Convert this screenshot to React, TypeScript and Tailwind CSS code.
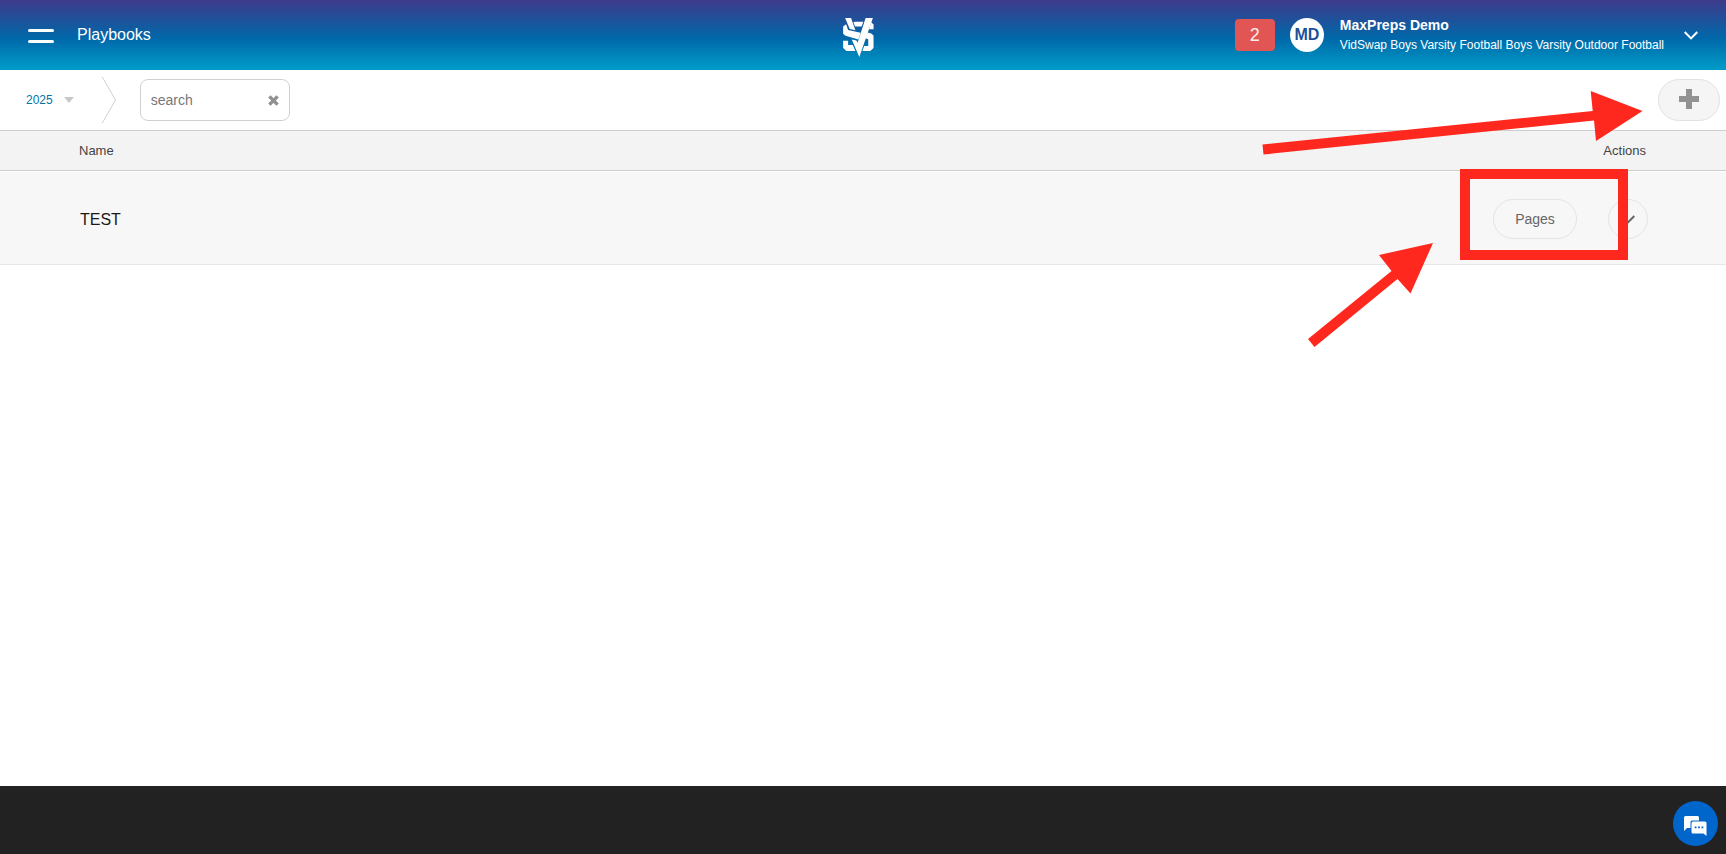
import React, { useState } from 'react';

interface Playbook {
    id: number;
    name: string;
}

const playbooks: Playbook[] = [{ id: 1, name: 'TEST' }];

const Logo: React.FC = () => (
    <svg viewBox="69 54 93 118" className="h-[39px] w-[31px]" fill="#fff" aria-label="VidSwap" role="img">
        <path d="M75 54H93L106 91L89 87Z" />
        <path d="M137 54H159L118 172L95 119L109 122L113 128Z" />
        <path d="M100 67L104 65H130L125 80H105Z" />
        <path d="M69 80L78 73L84 90L122 99L115 119L76 108L69 102Z" />
        <path d="M154 67L161 74V88H147Z" />
        <path d="M69 123H84V136H98L106 154H79L69 145Z" />
        <path d="M143 98L154 101L161 107V145L151 154H127L133 139H145V118L136 115Z" />
    </svg>
);

const Header: React.FC = () => (
    <header className="flex h-[70px] items-center bg-linear-to-b/srgb from-[#3f3a8c] via-[#0068a9] via-55% to-[#009dc9] text-white">
        <div className="flex flex-1 items-center pl-7">
            <button type="button" aria-label="Menu" className="mt-0.5 flex w-[26px] flex-col gap-2">
                <span className="h-[3px] w-full rounded-full bg-white" />
                <span className="h-[3px] w-full rounded-full bg-white" />
            </button>
            <h1 className="ml-[23px] text-base">Playbooks</h1>
        </div>
        <a href="#home" className="mt-1 mr-2.5">
            <Logo />
        </a>
        <div className="flex flex-1 items-center justify-end pr-7">
            <button type="button" className="h-8 w-10 rounded bg-[#e15555] text-lg leading-8 text-white/90">2</button>
            <div className="ml-[15px] flex size-[34px] items-center justify-center rounded-full bg-white font-bold text-[#1c5199]">MD</div>
            <div className="ml-4">
                <div className="text-sm font-bold leading-5">MaxPreps Demo</div>
                <div className="text-xs leading-5">VidSwap Boys Varsity Football Boys Varsity Outdoor Football</div>
            </div>
            <button type="button" aria-label="Account menu" className="ml-5">
                <svg viewBox="0 0 14 9" className="h-[9px] w-[14px]" fill="none" stroke="#fff" strokeWidth="2">
                    <path d="M.7 1L7 7.4L13.3 1" />
                </svg>
            </button>
        </div>
    </header>
);

interface ToolbarProps {
    search: string;
    onSearch: (value: string) => void;
}

const Toolbar: React.FC<ToolbarProps> = ({ search, onSearch }) => (
    <div className="flex h-[60px] items-center pr-1.5 pl-[26px]">
        <button type="button" className="flex items-center gap-[11px] text-xs text-[#0076a8]">
            2025
            <svg viewBox="0 0 10 6" className="h-1.5 w-2.5" fill="#c8c8c8">
                <path d="M0 0H10L5 6Z" />
            </svg>
        </button>
        <svg viewBox="0 0 14 46" className="ml-7 h-[46px] w-3.5" fill="none" stroke="#d0d0d0">
            <path d="M.3 0L13.5 23L.3 46" />
        </svg>
        <div className="ml-6 flex h-[42px] w-[150px] items-center rounded-lg border border-[#d0d0d0] pr-2.5 pl-2.5">
            <input
                type="text"
                aria-label="Search playbooks"
                placeholder="search"
                value={search}
                onChange={(e) => onSearch(e.target.value)}
                className="min-w-0 flex-1 text-sm text-[#444] outline-none placeholder:text-[#777]"
            />
            <button type="button" aria-label="Clear search" onClick={() => onSearch('')}>
                <svg viewBox="0 0 11 11" className="size-[11px]" stroke="#909090" strokeWidth="3.4">
                    <path d="M1.4 1.4L9.6 9.6M9.6 1.4L1.4 9.6" />
                </svg>
            </button>
        </div>
        <button type="button" aria-label="Add playbook" className="ml-auto flex h-[42px] w-[62px] items-center justify-center rounded-full border border-[#e2e2e2] bg-[#f5f5f5] pb-0.5">
            <svg viewBox="0 0 20 20" className="size-5" fill="#929292">
                <path d="M7 0H13V7H20V13H13V20H7V13H0V7H7Z" />
            </svg>
        </button>
    </div>
);

// Red callouts drawn over the right side of the list
const Callouts: React.FC = () => (
    <svg viewBox="1260 70 466 300" className="pointer-events-none absolute top-[70px] right-0 h-[300px] w-[466px]" fill="#ff281e">
        <path d="M1262.5 144.5L1592.7 111L1590.7 91L1642.5 111L1596 141L1594 120.5L1263.5 154.5Z" />
        <path d="M1308 339L1391.5 271L1379 255L1433 243L1410.5 293.5L1397.5 279L1314.5 347Z" />
        <rect x="1465" y="174" width="158" height="81" fill="none" stroke="#ff281e" strokeWidth="10" />
    </svg>
);

const App: React.FC = () => {
    const [search, setSearch] = useState('');
    const rows = playbooks.filter(p => p.name.toLowerCase().includes(search.toLowerCase()));

    return (
        <div className="relative flex min-h-screen flex-col bg-white font-['Liberation_Sans',Arial,sans-serif]">
            <Header />
            <Toolbar search={search} onSearch={setSearch} />
            <table className="w-full border-separate border-spacing-0">
                <thead>
                    <tr className="h-[41px] bg-[#f3f3f3] text-[13px] text-[#444]">
                        <th className="border-y border-[#cecece] pl-[79px] text-left font-normal">Name</th>
                        <th className="border-y border-[#cecece] pr-20 text-right font-normal">Actions</th>
                    </tr>
                </thead>
                <tbody>
                    {rows.map(p => (
                        <tr key={p.id} className="h-[94px] bg-[#f7f7f7]">
                            <td className="border-t border-b border-t-white border-b-[#e6e6e6] pt-1 pl-20 text-base text-[#1a1a1a]">{p.name}</td>
                            <td className="border-t border-b border-t-white border-b-[#e6e6e6] pt-0.5 pr-[78px]">
                                <div className="flex items-center justify-end gap-[31px]">
                                    <button type="button" className="h-10 w-[84px] rounded-full border border-[#e4e4e4] text-sm text-[#666]">Pages</button>
                                    <button type="button" aria-label="More actions" className="flex size-10 items-center justify-center rounded-full border border-[#e4e4e4]">
                                        <svg viewBox="0 0 14 9" className="h-[9px] w-3.5" fill="none" stroke="#666" strokeWidth="2">
                                            <path d="M.7 1L7 7.4L13.3 1" />
                                        </svg>
                                    </button>
                                </div>
                            </td>
                        </tr>
                    ))}
                </tbody>
            </table>
            <footer className="mt-auto h-[68px] bg-[#222]" />
            <button type="button" aria-label="Chat" className="fixed right-2 bottom-2 flex size-[45px] items-center justify-center rounded-full bg-[#0066cc]">
                <svg viewBox="0 0 23 20" className="mt-1 h-5 w-[23px]" fill="#fff">
                    <path d="M1.5 0H13.5Q15 0 15 1.5V4.5H8Q6.5 4.5 6.5 6V12H3L0 15V1.5Q0 0 1.5 0Z" />
                    <path d="M9 5.5H21Q22.5 5.5 22.5 7V20L19.5 17.5H9Q7.5 17.5 7.5 16V7Q7.5 5.5 9 5.5Z" />
                    <path d="M10.7 10.5h1.8v1.8h-1.8zM14.1 10.5h1.8v1.8h-1.8zM17.5 10.5h1.8v1.8h-1.8z" fill="#0066cc" />
                </svg>
            </button>
            <Callouts />
        </div>
    );
};

export default App;
